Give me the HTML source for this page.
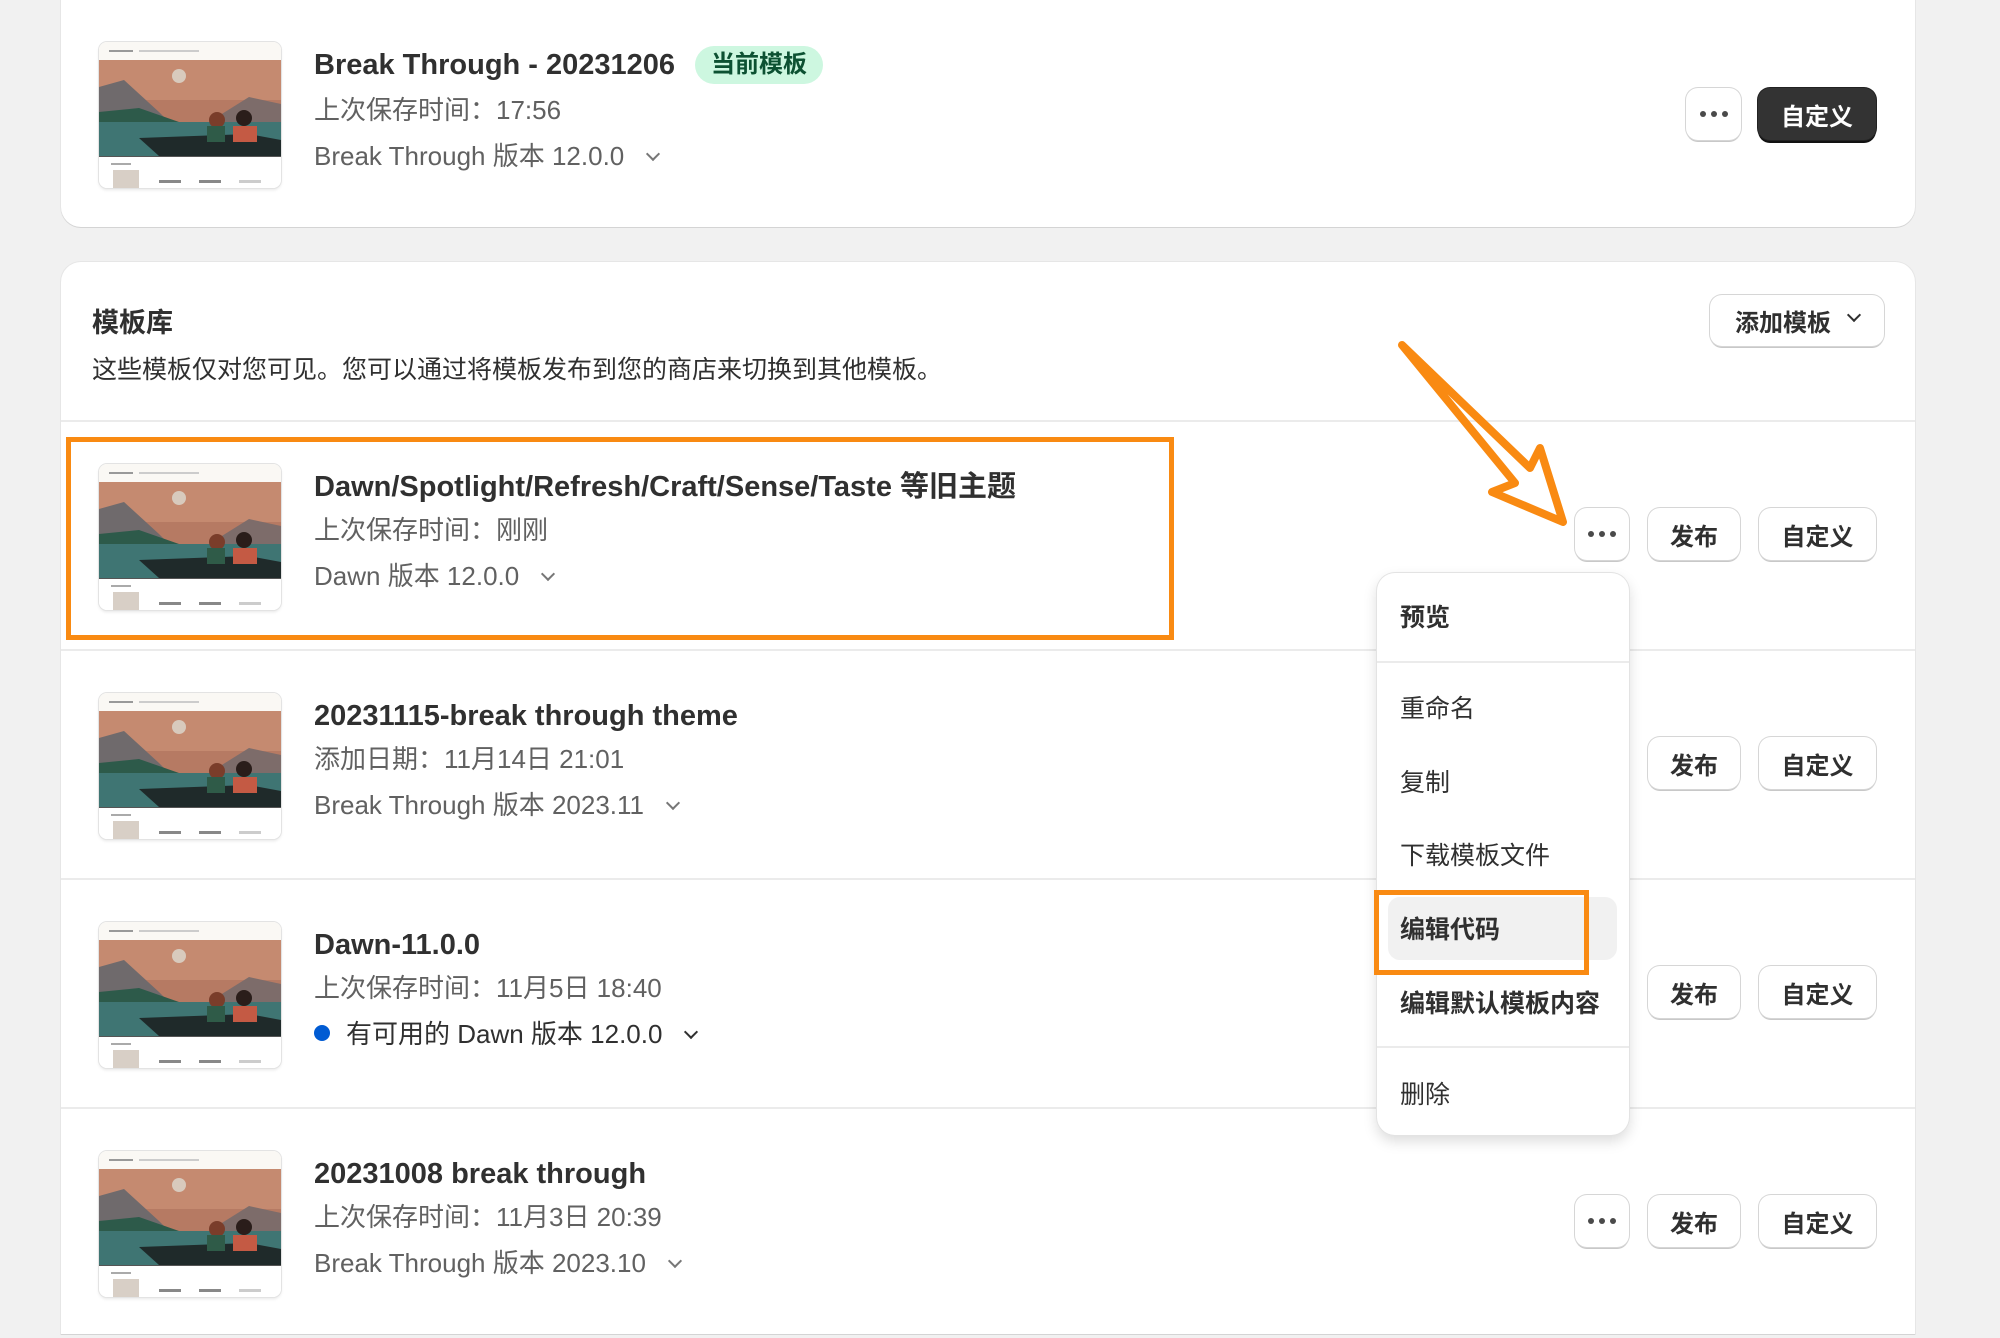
<!DOCTYPE html>
<html><head><meta charset="utf-8"><style>
*{box-sizing:border-box;margin:0;padding:0}
body{width:2000px;height:1338px;background:#f1f1f1;font-family:"Liberation Sans","Noto Sans CJK SC",sans-serif;color:#303030;position:relative;overflow:hidden}
.card{position:absolute;left:61px;width:1854px;background:#fff;box-shadow:0 1px 0 #d4d4d4,0 0 0 1px #e6e6e6}
.abs{position:absolute}
.title{position:absolute;left:314px;font-size:29px;font-weight:bold;color:#303030;white-space:nowrap;line-height:34px}
.l2,.l3{position:absolute;left:314px;font-size:26px;color:#616161;white-space:nowrap;line-height:32px}
.chev{display:inline-block;width:10px;height:10px;border-right:2px solid #777;border-bottom:2px solid #777;transform:rotate(45deg);margin-left:24px;position:relative;top:-6px}
.btn{position:absolute;height:52px;background:#fff;border-radius:12px;box-shadow:0 0 0 1px #d6d6d6,0 2px 0 #c8c8c8;font-size:24px;font-weight:bold;color:#303030;display:flex;align-items:center;justify-content:center}
.dots{display:flex;gap:5px}.dots i{width:6px;height:6px;border-radius:50%;background:#4a4a4a;display:block}
.row{position:absolute;left:0;width:1854px;border-top:2px solid #ebebeb}
.thumb{position:absolute;left:38px;top:42px;width:182px;height:146px;border-radius:8px;overflow:hidden;box-shadow:0 0 0 1px #e3e3e3,0 2px 3px rgba(0,0,0,.1)}
.menu{position:absolute;left:1377px;top:573px;width:252px;height:562px;background:#fff;border-radius:18px;box-shadow:0 0 0 1px #e3e3e3,0 6px 14px rgba(0,0,0,.15)}
.mi{position:absolute;left:23px;font-size:25px;color:#303030;line-height:30px}
</style></head><body>

<svg width="0" height="0" style="position:absolute"><defs>
<symbol id="th" viewBox="0 0 182 146">
<rect width="182" height="146" fill="#fff"/>
<rect y="0" width="182" height="18" fill="#faf8f4"/>
<rect x="10" y="8" width="24" height="2" fill="#999"/><rect x="40" y="8" width="60" height="2" fill="#ccc"/>
<rect y="18" width="182" height="96" fill="#b67a63"/>
<rect y="18" width="182" height="40" fill="#c58a70"/>
<circle cx="80" cy="34" r="7" fill="#d8cabd"/>
<polygon points="0,45 25,38 60,70 70,80 0,80" fill="#6f6a6c"/>
<polygon points="110,80 150,55 182,62 182,80" fill="#7d6c6a"/>
<polygon points="0,70 40,66 80,80 0,82" fill="#2d5a4a"/>
<rect y="80" width="182" height="34" fill="#3f7573"/>
<polygon points="40,96 150,92 182,98 182,114 60,114" fill="#1f2a2a"/>
<circle cx="118" cy="78" r="8" fill="#7a3d2a"/><rect x="108" y="84" width="18" height="16" fill="#2f5b48"/>
<circle cx="145" cy="76" r="8" fill="#2a1d1a"/><rect x="134" y="84" width="24" height="16" fill="#c45a44"/>
<rect y="114" width="182" height="1" fill="#555"/>
<rect x="12" y="121" width="20" height="2" fill="#aaa"/>
<rect x="14" y="128" width="26" height="18" fill="#d8cfc6"/><rect x="60" y="138" width="22" height="3" fill="#888"/><rect x="100" y="138" width="22" height="3" fill="#888"/><rect x="140" y="138" width="22" height="3" fill="#ccc"/>
</symbol></defs></svg>

<div class="card" style="top:-20px;height:247px;border-radius:0 0 20px 20px">
  <div style="position:absolute;left:38px;top:62px;width:182px;height:146px;border-radius:8px;overflow:hidden;box-shadow:0 0 0 1px #e3e3e3,0 2px 3px rgba(0,0,0,.1)"><svg width="182" height="146"><use href="#th"/></svg></div>
  <div class="title" style="left:253px;top:68px">Break Through - 20231206</div>
  <div class="abs" style="left:634px;top:66px;width:128px;height:38px;border-radius:19px;background:#cdf7e0;color:#0c5132;font-size:24px;font-weight:bold;text-align:center;line-height:38px">当前模板</div>
  <div class="l2" style="left:253px;top:114px">上次保存时间：17:56</div>
  <div class="l3" style="left:253px;top:160px">Break Through 版本 12.0.0<span class="chev"></span></div>
  <div class="btn" style="left:1625px;top:108px;width:55px"><div class="dots"><i></i><i></i><i></i></div></div>
  <div class="btn" style="left:1697px;top:108px;width:118px;background:#333;color:#fff;box-shadow:0 0 0 1px #222,0 3px 0 #111">自定义</div>
</div>

<div class="card" style="top:262px;height:1072px;border-radius:20px 20px 0 0">
  <div class="abs" style="left:31px;top:39px;font-size:27px;font-weight:bold">模板库</div>
  <div class="abs" style="left:31px;top:88px;font-size:25px;color:#303030;white-space:nowrap">这些模板仅对您可见。您可以通过将模板发布到您的商店来切换到其他模板。</div>
  <div class="btn" style="left:1649px;top:33px;width:174px;height:51px">添加模板<span class="chev" style="border-color:#303030;margin-left:18px"></span></div>

  <div class="row" style="top:158px;height:229px">
    <div class="thumb"><svg width="182" height="146"><use href="#th"/></svg></div>
    <div class="title" style="left:253px;top:48px">Dawn/Spotlight/Refresh/Craft/Sense/Taste 等旧主题</div>
    <div class="l2" style="left:253px;top:92px">上次保存时间：刚刚</div>
    <div class="l3" style="left:253px;top:138px">Dawn 版本 12.0.0<span class="chev"></span></div>
    <div class="btn" style="left:1514px;top:86px;width:54px"><div class="dots"><i></i><i></i><i></i></div></div>
    <div class="btn" style="left:1587px;top:86px;width:92px">发布</div>
    <div class="btn" style="left:1698px;top:86px;width:117px">自定义</div>
  </div>
  <div class="row" style="top:387px;height:229px">
    <div class="thumb"><svg width="182" height="146"><use href="#th"/></svg></div>
    <div class="title" style="left:253px;top:48px">20231115-break through theme</div>
    <div class="l2" style="left:253px;top:92px">添加日期：11月14日 21:01</div>
    <div class="l3" style="left:253px;top:138px">Break Through 版本 2023.11<span class="chev"></span></div>
    <div class="btn" style="left:1587px;top:86px;width:92px">发布</div>
    <div class="btn" style="left:1698px;top:86px;width:117px">自定义</div>
  </div>
  <div class="row" style="top:616px;height:229px">
    <div class="thumb"><svg width="182" height="146"><use href="#th"/></svg></div>
    <div class="title" style="left:253px;top:48px">Dawn-11.0.0</div>
    <div class="l2" style="left:253px;top:92px">上次保存时间：11月5日 18:40</div>
    <div class="l3" style="left:253px;top:138px;color:#303030"><span style="display:inline-block;width:16px;height:16px;border-radius:50%;background:#005bd3;margin-right:16px;position:relative;top:-2px"></span>有可用的 Dawn 版本 12.0.0<span class="chev" style="border-color:#303030"></span></div>
    <div class="btn" style="left:1587px;top:86px;width:92px">发布</div>
    <div class="btn" style="left:1698px;top:86px;width:117px">自定义</div>
  </div>
  <div class="row" style="top:845px;height:227px">
    <div class="thumb"><svg width="182" height="146"><use href="#th"/></svg></div>
    <div class="title" style="left:253px;top:48px">20231008 break through</div>
    <div class="l2" style="left:253px;top:92px">上次保存时间：11月3日 20:39</div>
    <div class="l3" style="left:253px;top:138px">Break Through 版本 2023.10<span class="chev"></span></div>
    <div class="btn" style="left:1514px;top:86px;width:54px"><div class="dots"><i></i><i></i><i></i></div></div>
    <div class="btn" style="left:1587px;top:86px;width:92px">发布</div>
    <div class="btn" style="left:1698px;top:86px;width:117px">自定义</div>
  </div>
</div>

<div class="abs" style="left:66px;top:437px;width:1108px;height:203px;border:5px solid #f98a12"></div>

<div class="menu">
  <div class="mi" style="top:30px;font-weight:bold">预览</div>
  <div class="abs" style="left:0;top:88px;width:252px;height:2px;background:#ebebeb"></div>
  <div class="mi" style="top:121px">重命名</div>
  <div class="mi" style="top:195px">复制</div>
  <div class="mi" style="top:268px">下载模板文件</div>
  <div class="abs" style="left:11px;top:324px;width:229px;height:63px;background:#f1f1f1;border-radius:12px"></div>
  <div class="mi" style="top:342px;font-weight:600">编辑代码</div>
  <div class="mi" style="top:416px;font-weight:600">编辑默认模板内容</div>
  <div class="abs" style="left:0;top:473px;width:252px;height:2px;background:#ebebeb"></div>
  <div class="mi" style="top:507px">删除</div>
</div>
<div class="abs" style="left:1374px;top:890px;width:215px;height:85px;border:5px solid #f98a12"></div>

<svg class="abs" style="left:0;top:0" width="2000" height="1338">
<polygon points="1402,345 1530,468 1540,448 1563,522 1492,492 1515,483" fill="none" stroke="#f98a12" stroke-width="8" stroke-linejoin="round"/>
</svg>
</body></html>
